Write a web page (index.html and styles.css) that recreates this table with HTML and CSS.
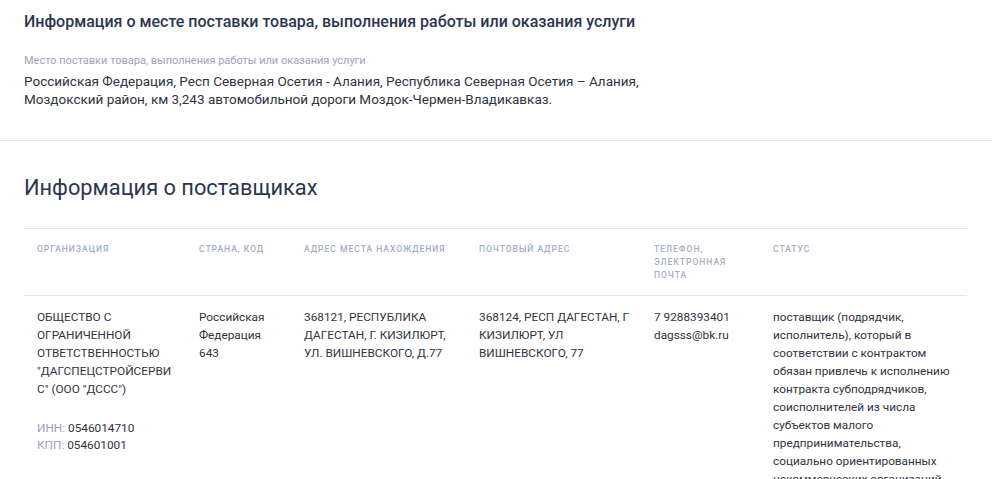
FILE: index.html
```html
<!DOCTYPE html>
<html lang="ru">
<head>
<meta charset="utf-8">
<link rel="stylesheet" href="styles.css">
</head>
<body>
<section class="place">
  <h2 class="place-title">Информация о месте поставки товара, выполнения работы или оказания услуги</h2>
  <div class="field">
    <div class="field-label">Место поставки товара, выполнения работы или оказания услуги</div>
    <div class="field-value">Российская Федерация, Респ Северная Осетия - Алания, Республика Северная Осетия – Алания,<br>Моздокский район, км 3,243 автомобильной дороги Моздок-Чермен-Владикавказ.</div>
  </div>
</section>
<section class="suppliers">
  <h2 class="suppliers-title">Информация о поставщиках</h2>
  <div class="table">
    <div class="row head">
      <div class="cell">Организация</div>
      <div class="cell">Страна, код</div>
      <div class="cell">Адрес места нахождения</div>
      <div class="cell">Почтовый адрес</div>
      <div class="cell">Телефон, электронная почта</div>
      <div class="cell">Статус</div>
    </div>
    <div class="row body">
      <div class="cell org">
        <div class="org-name">ОБЩЕСТВО С ОГРАНИЧЕННОЙ ОТВЕТСТВЕННОСТЬЮ "ДАГСПЕЦСТРОЙСЕРВИС" (ООО "ДССС")</div>
        <div class="org-codes">
          <div><span class="muted">ИНН:</span> 0546014710</div>
          <div><span class="muted">КПП:</span> 054601001</div>
        </div>
      </div>
      <div class="cell">Российская Федерация<br>643</div>
      <div class="cell">368121, РЕСПУБЛИКА ДАГЕСТАН, Г. КИЗИЛЮРТ, УЛ. ВИШНЕВСКОГО, Д.77</div>
      <div class="cell postal">368124, РЕСП ДАГЕСТАН, Г КИЗИЛЮРТ, УЛ ВИШНЕВСКОГО, 77</div>
      <div class="cell">7 9288393401<br>dagsss@bk.ru</div>
      <div class="cell">поставщик (подрядчик, исполнитель), который в соответствии с контрактом обязан привлечь к исполнению контракта субподрядчиков, соисполнителей из числа субъектов малого предпринимательства, социально ориентированных некоммерческих организаций</div>
    </div>
  </div>
</section>
</body>
</html>
```
FILE: styles.css
```css
* { box-sizing: border-box; }
html, body { margin: 0; padding: 0; background: #fff; }
body {
  font-family: Roboto, "Noto Sans", sans-serif;
  color: #2f3441;
  overflow: hidden;
  height: 479px;
}
.place {
  padding: 12px 24px 0;
  height: 141px;
  border-bottom: 1px solid #e4e5ee;
}
.place-title {
  margin: 0;
  font-size: 16px;
  line-height: 20px;
  font-weight: 500;
  color: #2b3650;
}
.field { margin-top: 22px; }
.field-label {
  font-size: 11px;
  line-height: 14px;
  color: #9aa3bf;
}
.field-value {
  margin-top: 4px;
  font-size: 13.5px;
  line-height: 18px;
  color: #2f3441;
}
.suppliers { padding: 0 25px 0 24px; }
.suppliers-title {
  margin: 33px 0 0;
  font-size: 21.8px;
  line-height: 28px;
  font-weight: 400;
  color: #2b3650;
}
.table {
  margin-top: 26px;
  border-top: 1px solid #e4e5ee;
}
.row {
  display: grid;
  grid-template-columns: 162px 105px 175px 175px 119px 1fr;
}
.head { border-bottom: 1px solid #e4e5ee; }
.cell { padding: 0 13px; }
.head .cell {
  padding-top: 14px;
  padding-bottom: 13px;
  font-size: 8.5px;
  line-height: 13px;
  letter-spacing: 1px;
  text-transform: uppercase;
  font-weight: 500;
  color: #a4acc6;
}
.body .cell {
  padding-top: 12px;
  font-size: 11.8px;
  line-height: 18px;
  color: #2f3441;
}
.body .postal { padding-right: 8px; }
.org-name { word-break: break-word; overflow-wrap: anywhere; }
.org-codes { margin-top: 22px; line-height: 17px; }
.muted { color: #9aa3bf; }
```
